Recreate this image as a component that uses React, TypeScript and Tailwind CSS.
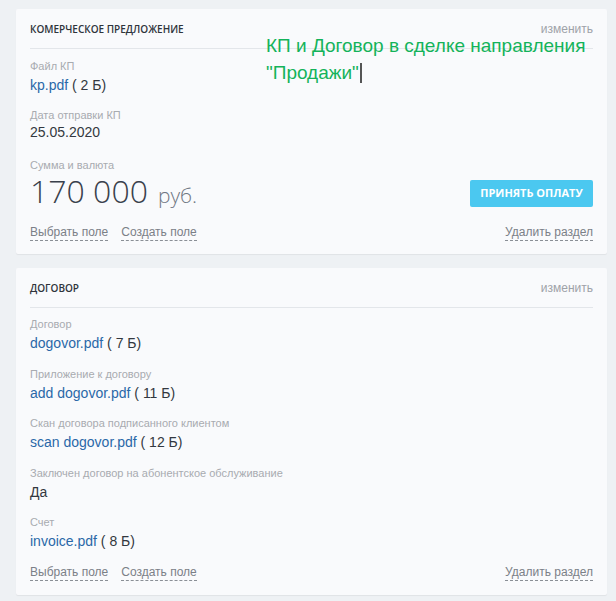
const sans = "font-['Liberation_Sans',Arial,sans-serif]";
const open = "font-['Open_Sans',sans-serif]";

type Field = { label: string; file?: string; size?: string; text?: string };

const Dashed = ({ children }: { children: React.ReactNode }) => (
  <span className="cursor-pointer border-b border-dashed border-[#8a8f96] leading-[15px] text-[#7b8087]">{children}</span>
);

const FieldRow = ({ f, gap = "mb-[14px]" }: { f: Field; gap?: string }) => (
  <div className={gap}>
    <div className="text-[11px] leading-[14px] text-[#a8abb0]">{f.label}</div>
    <div className="mt-[3px] text-[14px] leading-[18px] text-[#333840]">
      {f.file ? (
        <>
          <span className="text-[#2a68a8]">{f.file}</span> ( {f.size})
        </>
      ) : (
        f.text
      )}
    </div>
  </div>
);

const Footer = () => (
  <div className="flex items-center justify-between text-[12px]">
    <div className="flex gap-[13px]">
      <Dashed>Выбрать поле</Dashed>
      <Dashed>Создать поле</Dashed>
    </div>
    <Dashed>Удалить раздел</Dashed>
  </div>
);

const Header = ({ title }: { title: string }) => (
  <div className="flex items-center justify-between border-b border-[#e3e6ea] pb-[12px]">
    <span className={`${open} text-[10px] font-semibold uppercase leading-[14px] text-[#2f343b]`}>{title}</span>
    <span className="text-[12px] leading-[14px] text-[#9ea2a8]">изменить</span>
  </div>
);

const contract: Field[] = [
  { label: "Договор", file: "dogovor.pdf", size: "7 Б" },
  { label: "Приложение к договору", file: "add dogovor.pdf", size: "11 Б" },
  { label: "Скан договора подписанного клиентом", file: "scan dogovor.pdf", size: "12 Б" },
  { label: "Заключен договор на абонентское обслуживание", text: "Да" },
  { label: "Счет", file: "invoice.pdf", size: "8 Б" },
];

export default function App() {
  return (
    <div className={`${sans} relative min-h-[601px] w-[616px] bg-[#eef1f4] pl-[16px] pr-[9px] pt-[9px]`}>
      <div className="rounded-[2px] bg-[#f9fafc] px-[14px] pb-[13px] pt-[13px] shadow-[0_1px_1px_rgba(0,0,0,0.06)]">
        <Header title="Комерческое предложение" />
        <div className="pt-[10px]">
          <FieldRow f={{ label: "Файл КП", file: "kp.pdf", size: "2 Б" }} />
          <div className="mb-[17px]">
            <div className="text-[11px] leading-[14px] text-[#a8abb0]">Дата отправки КП</div>
            <div className="mt-[1px] text-[14px] leading-[18px] text-[#333840]">25.05.2020</div>
          </div>
          <div className="text-[11px] leading-[14px] text-[#a8abb0]">Сумма и валюта</div>
          <div className="mt-[2px] flex items-center justify-between">
            <div className={`${open} flex items-baseline leading-[34px]`}>
              <span className="text-[32px] font-light text-[#3a414c]">170 000</span>
              <span className="ml-[10px] text-[21px] font-light text-[#6f7682]">руб.</span>
            </div>
            <button className={`${open} h-[27px] w-[123px] rounded-[2px] bg-[#4bc8f0] text-[11px] font-bold uppercase text-white`}>
              Принять оплату
            </button>
          </div>
        </div>
        <div className="mt-[13px]">
          <Footer />
        </div>
      </div>

      <div className="mt-[14px] rounded-[2px] bg-[#f9fafc] px-[14px] pb-[14px] pt-[13px] shadow-[0_1px_1px_rgba(0,0,0,0.06)]">
        <Header title="Договор" />
        <div className="pt-[9px]">
          {contract.map((f) => (
            <FieldRow key={f.label} f={f} gap="mb-[14.5px]" />
          ))}
        </div>
        <div className="mt-[15px]">
          <Footer />
        </div>
      </div>

      <div className="absolute left-[266px] top-[32px] text-[19px] leading-[27px] text-[#14b35a]">
        <div>КП и Договор в сделке направления</div>
        <div className="flex items-center">
          "Продажи"
          <span className="ml-[1px] inline-block h-[20px] w-[2px] bg-[#555]" />
        </div>
      </div>
    </div>
  );
}
